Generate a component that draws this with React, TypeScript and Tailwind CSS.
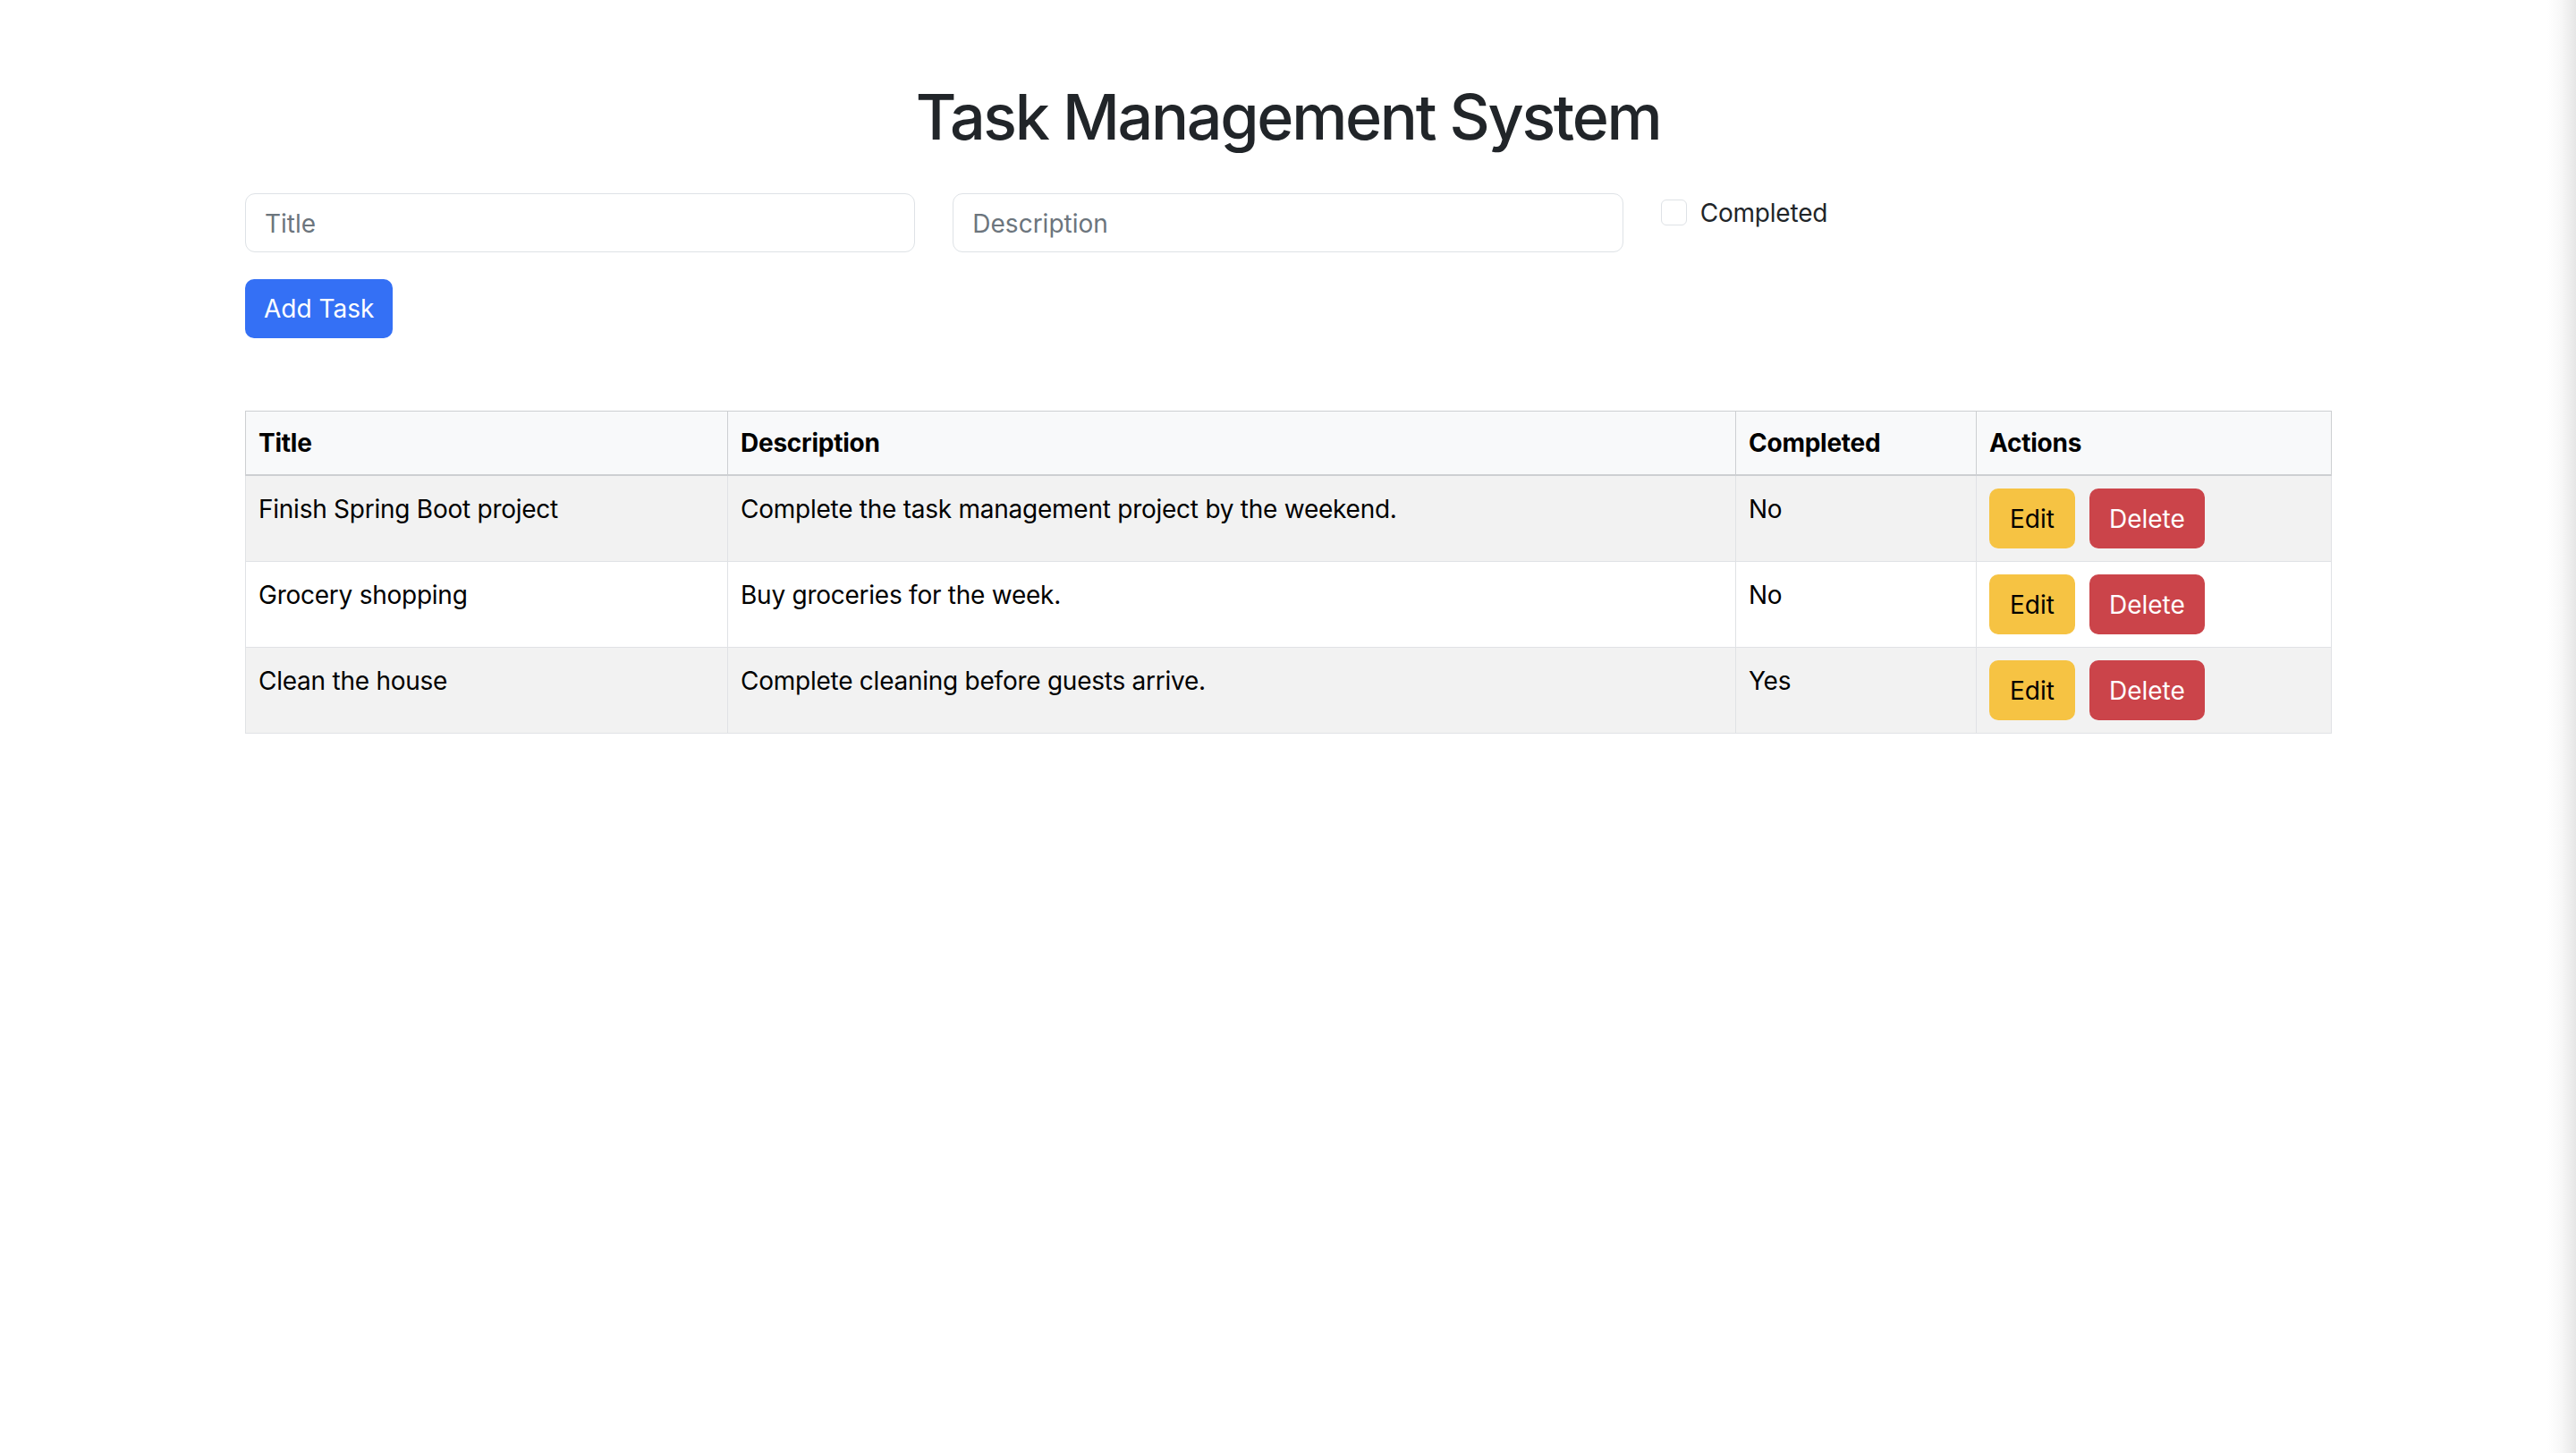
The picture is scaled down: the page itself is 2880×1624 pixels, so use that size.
import React from "react";

const tasks = [
  { title: "Finish Spring Boot project", description: "Complete the task management project by the weekend.", completed: false },
  { title: "Grocery shopping", description: "Buy groceries for the week.", completed: false },
  { title: "Clean the house", description: "Complete cleaning before guests arrive.", completed: true },
];

export default function App() {
  return (
    <div className="relative min-h-screen w-full overflow-hidden bg-white font-['Inter','Liberation_Sans',sans-serif] text-[#212529]">
      <div className="mx-auto w-[2332px] pt-[89px]">
        <h1 className="text-center text-[70px] font-medium leading-[84px] tracking-[-2.3px] text-[#212529]">Task Management System</h1>

        <div className="mt-[43px] grid grid-cols-3 gap-x-[42px]">
          <input
            type="text"
            placeholder="Title"
            className="h-[66px] w-full rounded-[11px] border border-[#dee2e6] bg-white px-[21px] pt-[2px] text-[28px] text-[#212529] outline-none placeholder:text-[#6c757d]"
          />
          <input
            type="text"
            placeholder="Description"
            className="h-[66px] w-full rounded-[11px] border border-[#dee2e6] bg-white px-[21px] pt-[2px] text-[28px] text-[#212529] outline-none placeholder:text-[#6c757d]"
          />
          <label className="flex items-start">
            <span className="mt-[7px] block h-[29px] w-[29px] rounded-[6px] border border-[#dee2e6] bg-white" />
            <span className="ml-[15px] pt-[1px] text-[28px] leading-[42px] tracking-[-0.2px] text-[#212529]">Completed</span>
          </label>
        </div>

        <button className="mt-[30px] h-[66px] rounded-[10px] bg-[#3470f5] px-[21px] text-[28px] leading-[42px] text-white">
          Add Task
        </button>

        <table className="mt-[81px] w-full table-fixed border-collapse text-[28px] leading-[42px] tracking-[-0.25px] text-black">
          <colgroup>
            <col className="w-[539px]" />
            <col className="w-[1127px]" />
            <col className="w-[269px]" />
            <col className="w-[397px]" />
          </colgroup>
          <thead>
            <tr className="bg-[#f8f9fa]">
              <th className="border border-b-2 border-[#cdcfd2] px-[14px] py-[14px] text-left font-bold">Title</th>
              <th className="border border-b-2 border-[#cdcfd2] px-[14px] py-[14px] text-left font-bold">Description</th>
              <th className="border border-b-2 border-[#cdcfd2] px-[14px] py-[14px] text-left font-bold">Completed</th>
              <th className="border border-b-2 border-[#cdcfd2] px-[14px] py-[14px] text-left font-bold">Actions</th>
            </tr>
          </thead>
          <tbody>
            {tasks.map((t, i) => (
              <tr key={i} className={i % 2 === 0 ? "bg-[#f2f2f2]" : "bg-white"}>
                <td className="border border-[#e0e2e5] px-[14px] pt-[16px] pb-[14px] align-top">{t.title}</td>
                <td className="border border-[#e0e2e5] px-[14px] pt-[16px] pb-[14px] align-top">{t.description}</td>
                <td className="border border-[#e0e2e5] px-[14px] pt-[16px] pb-[14px] align-top">{t.completed ? "Yes" : "No"}</td>
                <td className="border border-[#e0e2e5] px-[14px] py-[14px] align-top">
                  <div className="flex gap-[16px]">
                    <button className="h-[67px] rounded-[10px] bg-[#f6c343] px-[23px] text-[28px] leading-[42px] tracking-normal text-black">Edit</button>
                    <button className="h-[67px] rounded-[10px] bg-[#cb444a] px-[22px] text-[28px] leading-[42px] tracking-normal text-white">Delete</button>
                  </div>
                </td>
              </tr>
            ))}
          </tbody>
        </table>
      </div>
      <div className="pointer-events-none absolute right-0 top-0 h-full w-[32px] bg-gradient-to-r from-white/0 via-[#f7f7f7] to-[#e6e6e6]" />
    </div>
  );
}
